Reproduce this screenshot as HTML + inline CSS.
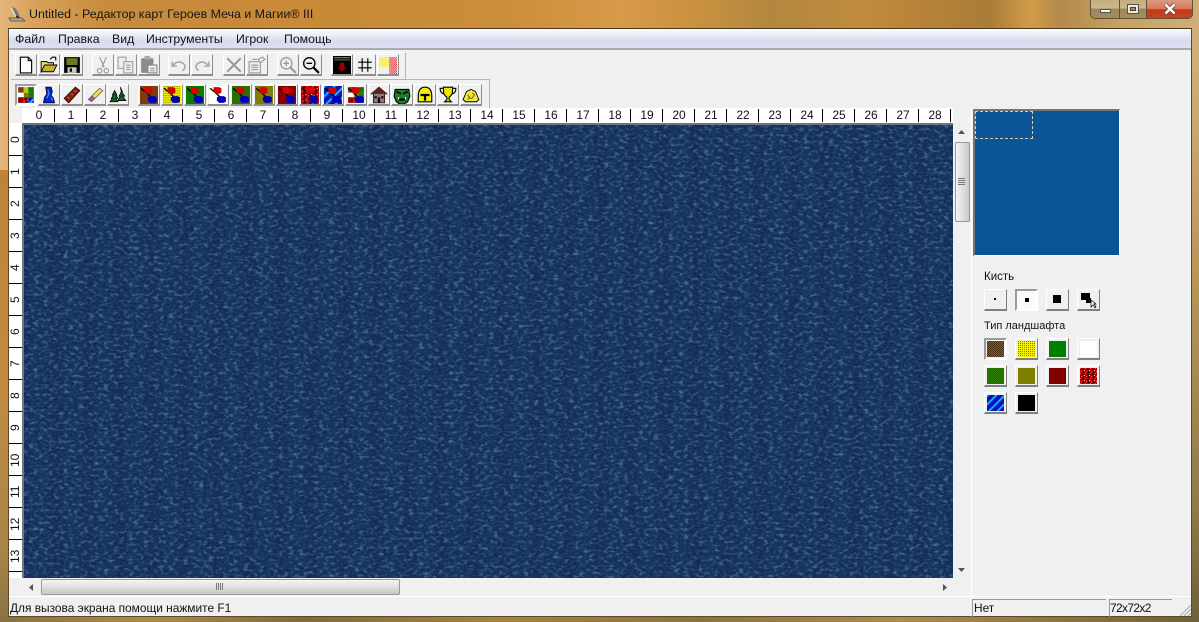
<!DOCTYPE html>
<html><head><meta charset="utf-8">
<style>
html,body{margin:0;padding:0}
body{width:1199px;height:622px;overflow:hidden;position:relative;font-family:"Liberation Sans",sans-serif;color:#000;
background:linear-gradient(90deg,#e6b67c 0,#d9a35e 30px,#c88a3c 110px,#c98a38 350px,#cc8d3a 500px,#d8994a 620px,#c8913f 700px,#b2873f 770px,#c08c3e 860px,#b68238 930px,#a87c38 990px,#d39b49 1030px,#b38a4a 1060px,#c6a263 1120px,#cfae7a 1199px)}
div,span{position:absolute;box-sizing:border-box}
.client{left:8px;top:28px;width:1184px;height:589px;background:#f0f0f0;border-top:1px solid #4a3a1c;border-left:1px solid #5b4a28;border-right:1px solid #5b4a28;border-bottom:1px solid #5b4a28}
.menu{left:9px;top:29px;width:1182px;height:21px;background:linear-gradient(180deg,#fbfbfe 0,#eef0f9 25%,#d9dcf0 60%,#dcdff2 100%);border-bottom:2px solid #a9abb3}
.m{top:32px;font-size:12.3px;line-height:14px;color:#111}
.b{width:22px;height:22px;background:#f0f0f0;border-top:1px solid #fff;border-left:1px solid #fff;border-right:1px solid #8f8f8f;border-bottom:2px solid #8f8f8f}
.b svg{position:absolute;left:1px;top:1px;width:18px;height:18px;display:block}
.t1{top:54px}.t2{top:84px}
.act{background:#fafafa;border:2px solid #a0a0a0;border-bottom-color:#fff;border-right-color:#fff}
.act svg{left:0;top:0}
.rt{top:108px;left:22px;width:931px;height:15px;background:#fff}
.rl{left:9px;top:123px;width:13px;height:455px;background:#fff}
.tk{top:109px;width:1px;height:13px;background:#000}
.lk{left:9px;width:13px;height:1px;background:#000}
.n{top:108px;width:32px;text-align:center;font-size:12px;line-height:15px;color:#111}
.v{left:9px;width:13px;height:32px;font-size:12px;line-height:13px;text-align:center;writing-mode:vertical-rl;transform:rotate(180deg);color:#111}
.map{left:22px;top:123px;width:931px;height:455px;background:#122e58;border-top:2px solid #6e7680;border-left:2px solid #6e7680;overflow:hidden}
.sb{background:#f0f0f0}
.thumb{background:linear-gradient(90deg,#f4f4f4,#dedede 55%,#c9c9c9);border:1px solid #9a9a9a;border-radius:2px}
.thumbh{background:linear-gradient(180deg,#f4f4f4,#dedede 55%,#c6c6c6);border:1px solid #9a9a9a;border-radius:2px}
.p{font-size:11.5px;line-height:14px;color:#111}
.tb{width:23px;height:22px;background:#f0f0f0;border-top:1px solid #fff;border-left:1px solid #fff;border-right:1px solid #808080;border-bottom:2px solid #808080}
.tb i{position:absolute;left:2px;top:2px;width:17px;height:16px;display:block}
.tb.act{border:2px solid #9a9a9a;border-bottom-color:#fff;border-right-color:#fff}
.tb.act i{left:1px;top:1px}
.st{font-size:11.9px;line-height:16px;color:#111}
</style></head>
<body>
<svg style="position:absolute;width:0;height:0">
<defs>
<pattern id="pb" width="2" height="2" patternUnits="userSpaceOnUse"><rect width="2" height="2" fill="#b04e10"/><rect width="1" height="1" fill="#4a2c10"/><rect x="1" y="1" width="1" height="1" fill="#4a2c10"/></pattern>
<pattern id="py" width="2" height="2" patternUnits="userSpaceOnUse"><rect width="2" height="2" fill="#f4f000"/><rect width="1" height="1" fill="#8a8400"/></pattern>
<pattern id="pl" width="2" height="2" patternUnits="userSpaceOnUse"><rect width="2" height="2" fill="#2f8000"/><rect width="1" height="1" fill="#226400"/><rect x="1" y="1" width="1" height="1" fill="#226400"/></pattern>
<pattern id="pr" width="5" height="5" patternUnits="userSpaceOnUse"><rect width="5" height="5" fill="#a80000"/><rect width="1" height="1" fill="#ff4040"/><rect x="2" y="1" width="2" height="1" fill="#200"/><rect x="1" y="3" width="1" height="1" fill="#ff6060"/><rect x="3" y="3" width="1" height="2" fill="#200"/><rect x="4" y="2" width="1" height="1" fill="#ffc0c0"/></pattern>
<pattern id="pw" width="6" height="6" patternUnits="userSpaceOnUse" patternTransform="rotate(-45)"><rect width="6" height="6" fill="#0a1fd0"/><rect y="0" width="6" height="1.5" fill="#18c8f0"/><rect y="3.5" width="6" height="1" fill="#000c90"/></pattern>
<pattern id="ps" width="2" height="2" patternUnits="userSpaceOnUse"><rect width="2" height="2" fill="#fff"/><rect width="1" height="1" fill="#e00000"/><rect x="1" y="1" width="1" height="1" fill="#e00000"/></pattern>
<g id="blobs"><path d="M1 2l7 6 3 3" stroke="#000" stroke-width="1.2" fill="none"/><path d="M4 1h5l2 1v4L9 7H6L4 5z" fill="#d80000"/><path d="M9 9h4l2 1v4l-2 1H9l-2-2v-3z" fill="#0000b8"/></g>
<g id="multi"><rect x="1" y="1" width="5" height="5" fill="url(#pb)"/><rect x="6" y="1" width="4" height="5" fill="#c8c800"/><rect x="10" y="1" width="5" height="5" fill="#0a7a00"/><rect x="1" y="6" width="5" height="4" fill="#fff"/><rect x="6" y="6" width="4" height="4" fill="#808000"/><rect x="10" y="6" width="5" height="4" fill="url(#pl)"/><rect x="1" y="10" width="5" height="5" fill="#900"/><rect x="6" y="10" width="4" height="5" fill="url(#pr)"/><rect x="10" y="10" width="5" height="5" fill="url(#pw)"/></g>
<filter id="tex" x="0" y="0" width="100%" height="100%"><feTurbulence type="fractalNoise" baseFrequency="0.2 0.32" numOctaves="2" seed="7"/><feColorMatrix type="matrix" values="0 0 0 0 0.34  0 0 0 0 0.47  0 0 0 0 0.66  3.4 0 0 0 -1.72"/></filter>
<filter id="tex2" x="0" y="0" width="100%" height="100%"><feTurbulence type="fractalNoise" baseFrequency="0.3 0.45" numOctaves="1" seed="3"/><feColorMatrix type="matrix" values="0 0 0 0 0.03  0 0 0 0 0.1  0 0 0 0 0.24  0 1.8 0 0 -0.6"/></filter>
</defs>
</svg>

<!-- frame tint -->
<div style="left:0;top:170px;width:8px;height:452px;background:linear-gradient(180deg,#bf8238,#c08a42 50%,#a88448 85%,#8a7344)"></div>
<div style="left:1192px;top:60px;width:7px;height:562px;background:linear-gradient(180deg,#cfae7a,#b79558 40%,#8f7a4a 80%,#6f6038)"></div>
<div style="left:0;top:617px;width:1199px;height:5px;background:linear-gradient(90deg,#8a7040,#b08a4a 150px,#7f6a40 300px,#a98140 500px,#8b7242 700px,#b08a50 900px,#6f6038 1199px)"></div>

<!-- title -->
<svg style="position:absolute;left:8px;top:5px" width="18" height="18" viewBox="0 0 18 18"><path d="M4 2l3 1 3 4 2 5-3 1-2-4z" fill="#777"/><path d="M3 3l3 5 2 4" stroke="#eee" fill="none"/><path d="M1 13h13l3 3H3z" fill="#b9a98a" stroke="#444" stroke-width=".7"/><path d="M8 11l3 2" stroke="#222" stroke-width="1.5"/></svg>
<span style="left:29px;top:6px;font-size:12.4px;line-height:16px;color:#161616;white-space:nowrap">Untitled - Редактор карт Героев Меча и Магии® III</span>
<!-- window buttons -->
<div style="left:1090px;top:0;width:103px;height:19px;border:1px solid #5e5138;border-top:0;border-radius:0 0 5px 5px;background:linear-gradient(180deg,#c5ad7e,#cbb78e 45%,#9c8758 50%,#a58d5e);overflow:hidden">
 <div style="left:28px;top:0;width:1px;height:19px;background:#5e5138"></div>
 <div style="left:55px;top:0;width:1px;height:19px;background:#5e5138"></div>
 <div style="left:56px;top:0;width:46px;height:19px;background:linear-gradient(180deg,#dc9a80,#d8775c 45%,#c13a18 52%,#c4461f)"></div>
 <div style="left:9px;top:9px;width:11px;height:4px;background:#f4f4f4;border:1px solid #555"></div>
 <div style="left:36px;top:4px;width:12px;height:10px;background:#f0e9da;border:1px solid #555"></div>
 <div style="left:39px;top:7px;width:6px;height:4px;background:#9c8758;border:1px solid #444"></div>
 <svg style="position:absolute;left:72px;top:3px" width="14" height="12" viewBox="0 0 14 12"><path d="M2.5 1.5l9 9M11.5 1.5l-9 9" stroke="#4c3c30" stroke-width="4"/><path d="M2.5 1.5l9 9M11.5 1.5l-9 9" stroke="#fff" stroke-width="2.6"/></svg>
</div>

<div class="client"></div>
<div class="menu"></div>
<span class="m" style="left:15px">Файл</span>
<span class="m" style="left:58px">Правка</span>
<span class="m" style="left:112px">Вид</span>
<span class="m" style="left:146px">Инструменты</span>
<span class="m" style="left:236px">Игрок</span>
<span class="m" style="left:284px">Помощь</span>

<!-- toolbar separators -->
<div style="left:11px;top:52px;width:395px;height:27px;border-top:1px solid #fff;border-right:1px solid #b5b5b5"></div>
<div style="left:11px;top:79px;width:479px;height:29px;border-top:1px solid #b5b5b5;border-right:1px solid #b5b5b5"></div>

<!-- toolbar 1 -->
<div class="b t1" style="left:15px"><svg viewBox="0 0 16 16"><path d="M3 1h7l3 3v11H3z" fill="#fff" stroke="#000"/><path d="M10 1v3h3" fill="none" stroke="#000"/></svg></div>
<div class="b t1" style="left:38px"><svg viewBox="0 0 16 16"><path d="M1 5h5l1 1h5v3H4L1 14z" fill="#e8e070" stroke="#000" stroke-width=".8"/><path d="M1 14l3-6h11l-3 6z" fill="#c8b030" stroke="#000" stroke-width=".8"/><path d="M9 3l2-2 3 0M14 1v3" stroke="#000" fill="none"/></svg></div>
<div class="b t1" style="left:61px"><svg viewBox="0 0 16 16"><path d="M1 1h14v14H1z" fill="#000"/><rect x="3" y="2" width="10" height="6" fill="#6a7a20"/><rect x="4" y="10" width="8" height="5" fill="#c8c8c8"/><rect x="6" y="11" width="2" height="3" fill="#000"/></svg></div>
<div class="b t1" style="left:92px"><svg viewBox="0 0 16 16" fill="none" stroke="#999"><path d="M5 1l4 9M11 1L7 10"/><circle cx="5" cy="13" r="2"/><circle cx="11" cy="13" r="2"/></svg></div>
<div class="b t1" style="left:115px"><svg viewBox="0 0 16 16" fill="#eee" stroke="#a0a0a0"><path d="M1 1h7v10H1z"/><path d="M6 5h8v10H6z"/><path d="M8 8h4M8 10h4M8 12h4"/></svg></div>
<div class="b t1" style="left:138px"><svg viewBox="0 0 16 16"><rect x="1" y="2" width="11" height="13" rx="1" fill="#8c8c8c"/><rect x="4" y="0" width="5" height="3" fill="#aaa"/><rect x="7" y="8" width="8" height="7" fill="#eee" stroke="#888"/><path d="M9 11h4M9 13h4" stroke="#999"/></svg></div>
<div class="b t1" style="left:168px"><svg viewBox="0 0 16 16" fill="none" stroke="#a6a6a6" stroke-width="1.4"><path d="M2 5v4h4M3 8c3-4 8-3 10 0 1 2 0 4-2 5"/></svg></div>
<div class="b t1" style="left:191px"><svg viewBox="0 0 16 16" fill="none" stroke="#a6a6a6" stroke-width="1.4"><path d="M14 5v4h-4M13 8c-3-4-8-3-10 0-1 2 0 4 2 5"/></svg></div>
<div class="b t1" style="left:223px"><svg viewBox="0 0 16 16"><path d="M2 2l12 12M14 2L2 14" stroke="#9a9a9a" stroke-width="1.8"/></svg></div>
<div class="b t1" style="left:246px"><svg viewBox="0 0 16 16" fill="#eee" stroke="#999"><path d="M1 5h10v10H1z"/><path d="M3 8h6M3 10h6M3 12h6M4 3h4"/><path d="M9 3l4-2 2 2-4 3z"/></svg></div>
<div class="b t1" style="left:277px"><svg viewBox="0 0 16 16" fill="none" stroke="#9a9a9a" stroke-width="1.2"><circle cx="6.5" cy="6.5" r="5"/><path d="M4 6.5h5M6.5 4v5"/><path d="M10 10l5 5" stroke-width="2"/></svg></div>
<div class="b t1" style="left:300px"><svg viewBox="0 0 16 16" fill="none" stroke="#000" stroke-width="1.2"><circle cx="6.5" cy="6.5" r="5"/><path d="M4 6.5h5"/><path d="M10 10l5 5" stroke-width="2"/></svg></div>
<div class="b t1" style="left:331px"><svg viewBox="0 0 16 16"><rect width="16" height="16" fill="#000"/><rect x="1" y="1" width="14" height="1" fill="#6c9a50"/><rect x="1" y="3" width="14" height="1" fill="#4a7038"/><path d="M6 6h4v4h2l-4 4-4-4h2z" fill="#a00000"/></svg></div>
<div class="b t1" style="left:354px"><svg viewBox="0 0 16 16"><path d="M2 5.500h12M2 10.500h12M5.500 2v12M10.500 2v12" stroke="#000" stroke-width="1"/></svg></div>
<div class="b t1" style="left:377px"><svg viewBox="0 0 16 16"><rect x="0" y="1" width="9" height="9" fill="#f6f06a"/><rect x="9" y="1" width="7" height="15" fill="url(#ps)"/></svg></div>

<!-- toolbar 2 -->
<div class="b t2 act" style="left:15px"><svg viewBox="0 0 16 16"><use href="#multi"/></svg></div>
<div class="b t2" style="left:38px"><svg viewBox="0 0 16 16"><path d="M5 1h5l1 4-1 3 2 3 1 4H3l1-5 2-3z" fill="#0a20c8" stroke="#000030" stroke-width=".6"/><path d="M7 3l1 4-2 4M10 10l1 3" stroke="#38a0f0" fill="none"/></svg></div>
<div class="b t2" style="left:61px"><svg viewBox="0 0 16 16"><path d="M1 11L11 1l4 3L5 15z" fill="#802010" stroke="#300" stroke-width=".7"/><path d="M4 10l2 1M7 7l2 1M10 4l2 1" stroke="#d06040"/></svg></div>
<div class="b t2" style="left:84px"><svg viewBox="0 0 16 16"><path d="M5 9l7-7 3 2-7 7z" fill="#f0e040" stroke="#555" stroke-width=".6"/><path d="M2 12l3-3 3 2-3 3z" fill="#b050c0" stroke="#555" stroke-width=".6"/></svg></div>
<div class="b t2" style="left:107px"><svg viewBox="0 0 16 16" fill="#0a6a20" stroke="#000" stroke-width=".7"><path d="M10 1l2 4h-1l3 4h-2l3 4H8l2-4H9l2-4z"/><path d="M5 4l2 4H6l2 3H6l2 3H1l2-3H2l2-3H3z"/></svg></div>

<div class="b t2" style="left:138px"><svg viewBox="0 0 16 16"><rect width="16" height="16" fill="url(#pb)"/><use href="#blobs"/></svg></div>
<div class="b t2" style="left:161px"><svg viewBox="0 0 16 16"><rect width="16" height="16" fill="url(#py)"/><use href="#blobs"/></svg></div>
<div class="b t2" style="left:184px"><svg viewBox="0 0 16 16"><rect width="16" height="16" fill="#0a7a00"/><use href="#blobs"/></svg></div>
<div class="b t2" style="left:207px"><svg viewBox="0 0 16 16"><rect width="16" height="16" fill="#fff"/><use href="#blobs"/></svg></div>
<div class="b t2" style="left:230px"><svg viewBox="0 0 16 16"><rect width="16" height="16" fill="url(#pl)"/><use href="#blobs"/></svg></div>
<div class="b t2" style="left:253px"><svg viewBox="0 0 16 16"><rect width="16" height="16" fill="#808000"/><use href="#blobs"/></svg></div>
<div class="b t2" style="left:276px"><svg viewBox="0 0 16 16"><rect width="16" height="16" fill="#8a0000"/><use href="#blobs"/></svg></div>
<div class="b t2" style="left:299px"><svg viewBox="0 0 16 16"><rect width="16" height="16" fill="url(#pr)"/><use href="#blobs"/></svg></div>
<div class="b t2" style="left:322px"><svg viewBox="0 0 16 16"><rect width="16" height="16" fill="url(#pw)"/><use href="#blobs"/></svg></div>
<div class="b t2" style="left:345px"><svg viewBox="0 0 16 16"><use href="#multi"/><use href="#blobs"/></svg></div>
<div class="b t2" style="left:368px"><svg viewBox="0 0 16 16"><path d="M8 1l7 6h-2v8H3V7H1z" fill="#808080" stroke="#300" stroke-width=".7"/><path d="M8 1l7 6H1z" fill="#602020"/><rect x="7" y="10" width="2" height="5" fill="#300"/><rect x="4" y="9" width="2" height="2" fill="#300"/><rect x="10" y="9" width="2" height="2" fill="#300"/></svg></div>
<div class="b t2" style="left:391px"><svg viewBox="0 0 16 16"><path d="M2 3h12l1 6-2 5-3 2H6l-3-2-2-5z" fill="#1a8030" stroke="#000"/><path d="M3 5l4 2M13 5L9 7" stroke="#000" stroke-width="1.4"/><path d="M5 7h1M10 7h1" stroke="#f00"/><path d="M5 11h6v2H5z" fill="#000"/><path d="M5 10v2M11 10v2" stroke="#fff"/></svg></div>
<div class="b t2" style="left:414px"><svg viewBox="0 0 16 16"><path d="M8 1c4 0 6 3 6 8v5H2V9c0-5 2-8 6-8z" fill="#f8f000" stroke="#000"/><path d="M4 7h8v2H9v4H7V9H4z" fill="#000"/></svg></div>
<div class="b t2" style="left:437px"><svg viewBox="0 0 16 16" fill="none" stroke="#000"><path d="M4 1h8v4c0 3-2 4-3 5v2l2 2H5l2-2v-2C6 9 4 8 4 5z" fill="#f0e800"/><path d="M4 2H1c0 3 1 4 3 5M12 2h3c0 3-1 4-3 5"/></svg></div>
<div class="b t2" style="left:460px"><svg viewBox="0 0 16 16"><path d="M8 3l4 2 3 7-2 2H3l-2-2 3-7z" fill="#f0e840" stroke="#000" stroke-width=".8"/><path d="M5 8l2 2-2 2M9 6l2 2-2 3M7 11h2" stroke="#807000" fill="none"/></svg></div>

<!-- top ruler -->
<div class="rt"></div>
<span class="n" style="left:23px">0</span><span class="n" style="left:55px">1</span><span class="n" style="left:87px">2</span><span class="n" style="left:119px">3</span><span class="n" style="left:151px">4</span><span class="n" style="left:183px">5</span><span class="n" style="left:215px">6</span><span class="n" style="left:247px">7</span><span class="n" style="left:279px">8</span><span class="n" style="left:311px">9</span><span class="n" style="left:343px">10</span><span class="n" style="left:375px">11</span><span class="n" style="left:407px">12</span><span class="n" style="left:439px">13</span><span class="n" style="left:471px">14</span><span class="n" style="left:503px">15</span><span class="n" style="left:535px">16</span><span class="n" style="left:567px">17</span><span class="n" style="left:599px">18</span><span class="n" style="left:631px">19</span><span class="n" style="left:663px">20</span><span class="n" style="left:695px">21</span><span class="n" style="left:727px">22</span><span class="n" style="left:759px">23</span><span class="n" style="left:791px">24</span><span class="n" style="left:823px">25</span><span class="n" style="left:855px">26</span><span class="n" style="left:887px">27</span><span class="n" style="left:919px">28</span>
<div class="tk" style="left:54px"></div><div class="tk" style="left:86px"></div><div class="tk" style="left:118px"></div><div class="tk" style="left:150px"></div><div class="tk" style="left:182px"></div><div class="tk" style="left:214px"></div><div class="tk" style="left:246px"></div><div class="tk" style="left:278px"></div><div class="tk" style="left:310px"></div><div class="tk" style="left:342px"></div><div class="tk" style="left:374px"></div><div class="tk" style="left:406px"></div><div class="tk" style="left:438px"></div><div class="tk" style="left:470px"></div><div class="tk" style="left:502px"></div><div class="tk" style="left:534px"></div><div class="tk" style="left:566px"></div><div class="tk" style="left:598px"></div><div class="tk" style="left:630px"></div><div class="tk" style="left:662px"></div><div class="tk" style="left:694px"></div><div class="tk" style="left:726px"></div><div class="tk" style="left:758px"></div><div class="tk" style="left:790px"></div><div class="tk" style="left:822px"></div><div class="tk" style="left:854px"></div><div class="tk" style="left:886px"></div><div class="tk" style="left:918px"></div><div class="tk" style="left:950px"></div>

<!-- left ruler -->
<div class="rl"></div>
<span class="v" style="top:124px">0</span><span class="v" style="top:156px">1</span><span class="v" style="top:188px">2</span><span class="v" style="top:220px">3</span><span class="v" style="top:252px">4</span><span class="v" style="top:284px">5</span><span class="v" style="top:316px">6</span><span class="v" style="top:348px">7</span><span class="v" style="top:380px">8</span><span class="v" style="top:412px">9</span><span class="v" style="top:444px">10</span><span class="v" style="top:476px">11</span><span class="v" style="top:508px">12</span><span class="v" style="top:540px">13</span>
<div class="lk" style="top:155px"></div><div class="lk" style="top:187px"></div><div class="lk" style="top:219px"></div><div class="lk" style="top:251px"></div><div class="lk" style="top:283px"></div><div class="lk" style="top:315px"></div><div class="lk" style="top:347px"></div><div class="lk" style="top:379px"></div><div class="lk" style="top:411px"></div><div class="lk" style="top:443px"></div><div class="lk" style="top:475px"></div><div class="lk" style="top:507px"></div><div class="lk" style="top:539px"></div><div class="lk" style="top:571px"></div>

<!-- map -->
<div class="map">
<svg width="931" height="455" style="position:absolute;left:0;top:0;display:block"><rect width="931" height="455" fill="#122e58"/><rect width="931" height="455" filter="url(#tex2)" opacity=".5"/><rect width="931" height="455" filter="url(#tex)" opacity=".4"/></svg>
<div style="left:0;top:0;width:931px;height:455px;background:repeating-linear-gradient(90deg,rgba(0,10,40,.09) 0,rgba(0,10,40,0) 10px,rgba(0,10,40,0) 22px,rgba(0,10,40,.09) 32px)"></div>
</div>

<!-- v scroll -->
<div class="sb" style="left:953px;top:123px;width:17px;height:455px"></div>
<svg style="position:absolute;left:957px;top:129px" width="9" height="6"><path d="M4.500 1L8 5H1z" fill="#555"/></svg>
<div class="thumb" style="left:955px;top:142px;width:15px;height:80px"></div>
<div style="left:958px;top:178px;width:7px;height:7px;background:repeating-linear-gradient(180deg,#777 0,#777 1px,transparent 1px,transparent 2px)"></div>
<svg style="position:absolute;left:957px;top:567px" width="9" height="6"><path d="M4.500 5L8 1H1z" fill="#555"/></svg>
<!-- h scroll -->
<div class="sb" style="left:22px;top:578px;width:948px;height:18px"></div>
<svg style="position:absolute;left:28px;top:583px" width="6" height="9"><path d="M1 4.500L5 1v7z" fill="#555"/></svg>
<div class="thumbh" style="left:41px;top:579px;width:359px;height:16px"></div>
<div style="left:216px;top:583px;width:7px;height:7px;background:repeating-linear-gradient(90deg,#777 0,#777 1px,transparent 1px,transparent 2px)"></div>
<svg style="position:absolute;left:942px;top:583px" width="6" height="9"><path d="M5 4.500L1 1v7z" fill="#555"/></svg>

<!-- side panel -->
<div style="left:971px;top:108px;width:1px;height:490px;background:#fff"></div>
<div style="left:973px;top:109px;width:147px;height:147px;background:#0a5596;border-top:2px solid #6e7680;border-left:2px solid #6e7680;border-right:1px solid #fff;border-bottom:1px solid #fff"></div>
<div style="left:975px;top:111px;width:58px;height:28px;border:1px dashed #d8cdb0;border-left-color:#d8d8d8"></div>

<span class="p" style="left:984px;top:270px">Кисть</span>
<div class="tb" style="left:984px;top:289px"><svg style="position:absolute;left:0;top:0" width="20" height="19"><rect x="9" y="8" width="2" height="2" fill="#000"/></svg></div>
<div class="tb act" style="left:1015px;top:289px;background:#fafafa"><svg style="position:absolute;left:0;top:0" width="20" height="19"><rect x="8" y="7" width="4" height="4" fill="#000"/></svg></div>
<div class="tb" style="left:1046px;top:289px"><svg style="position:absolute;left:0;top:0" width="20" height="19"><rect x="6" y="5" width="8" height="8" fill="#000"/></svg></div>
<div class="tb" style="left:1077px;top:289px"><svg style="position:absolute;left:0;top:0" width="21" height="19"><rect x="3" y="3" width="9" height="7" fill="#000"/><rect x="8" y="8" width="5" height="5" fill="#000"/><path d="M13 10v7l2-2 2 3 1-1-2-3h2z" fill="#fff" stroke="#000" stroke-width=".7"/></svg></div>

<span class="p" style="left:984px;top:319px;font-size:11px">Тип ландшафта</span>
<div class="tb act" style="left:984px;top:338px"><i><svg width="17" height="16" style="display:block"><rect width="17" height="16" fill="url(#pb)"/></svg></i></div>
<div class="tb" style="left:1015px;top:338px"><i><svg width="17" height="16" style="display:block"><rect width="17" height="16" fill="url(#py)"/></svg></i></div>
<div class="tb" style="left:1046px;top:338px"><i style="background:#008000"></i></div>
<div class="tb" style="left:1077px;top:338px"><i style="background:#fff"></i></div>
<div class="tb" style="left:984px;top:365px"><i><svg width="17" height="16" style="display:block"><rect width="17" height="16" fill="url(#pl)"/></svg></i></div>
<div class="tb" style="left:1015px;top:365px"><i style="background:#808000"></i></div>
<div class="tb" style="left:1046px;top:365px"><i style="background:#800000"></i></div>
<div class="tb" style="left:1077px;top:365px"><i><svg width="17" height="16" style="display:block"><rect width="17" height="16" fill="url(#pr)"/></svg></i></div>
<div class="tb" style="left:984px;top:392px"><i><svg width="17" height="16" style="display:block"><rect width="17" height="16" fill="url(#pw)"/></svg></i></div>
<div class="tb" style="left:1015px;top:392px"><i style="background:#000"></i></div>

<!-- status bar -->
<div style="left:9px;top:596px;width:1182px;height:1px;background:#fff"></div>
<span class="st" style="left:10px;top:600px">Для вызова экрана помощи нажмите F1</span>
<div style="left:972px;top:599px;width:134px;height:18px;border-top:1px solid #999;border-left:1px solid #999"></div>
<span class="st" style="left:974px;top:600px">Нет</span>
<div style="left:1109px;top:599px;width:63px;height:18px;border-top:1px solid #999;border-left:1px solid #999"></div>
<span class="st" style="left:1110px;top:600px;letter-spacing:-.6px">72x72x2</span>
<svg style="position:absolute;left:1179px;top:604px" width="12" height="12"><path d="M1 12L12 1M5 12l7-7M9 12l3-3" stroke="#a8a8a8"/></svg>
</body></html>
